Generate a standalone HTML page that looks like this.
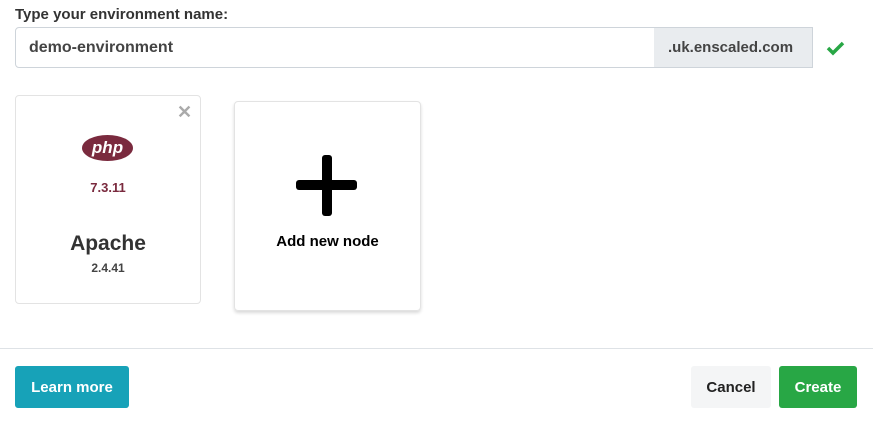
<!DOCTYPE html><html><head><style>
body{margin:0;width:873px;height:421px;background:#fff;font-family:"Liberation Sans",sans-serif;position:relative;overflow:hidden;color:#333}
.a{position:absolute}
</style></head><body>
<div class="a" style="left:15px;top:6px;font-size:15px;font-weight:bold;color:#333">Type your environment name:</div>
<div class="a" style="left:15px;top:27px;width:638px;height:39px;border:1px solid #ced4da;border-radius:4px 0 0 4px;"></div>
<div class="a" style="left:29px;top:39px;font-size:16px;font-weight:bold;color:#444">demo-environment</div>
<div class="a" style="left:654px;top:27px;width:159px;background:#e9ecef;border:1px solid #ced4da;border-left:none;box-sizing:border-box;height:41px"></div>
<div class="a" style="left:668px;top:39px;font-size:15px;font-weight:bold;color:#444">.uk.enscaled.com</div>
<svg class="a" style="left:825px;top:39px" width="22" height="18"><path d="M3 9l5 5 10-10" stroke="#28a745" stroke-width="3.5" fill="none"/></svg>
<div class="a" style="left:15px;top:95px;width:184px;height:207px;border:1px solid #e3e3e3;border-radius:4px"></div>
<div class="a" style="left:177px;top:102px;font-size:18px;font-weight:bold;color:#aaa">✕</div>
<div class="a" style="left:82px;top:135px;width:51px;height:26px;border-radius:50%;background:#7a2a3e;color:#fff;font-size:17px;font-weight:bold;font-style:italic;text-align:center;line-height:25px">php</div>
<div class="a" style="left:15px;top:180px;width:186px;text-align:center;font-size:13px;font-weight:bold;color:#7a2a3e">7.3.11</div>
<div class="a" style="left:15px;top:232px;width:186px;text-align:center;font-size:21px;font-weight:bold;color:#333">Apache</div>
<div class="a" style="left:15px;top:261px;width:186px;text-align:center;font-size:12px;font-weight:bold;color:#444">2.4.41</div>
<div class="a" style="left:234px;top:101px;width:185px;height:208px;border:1px solid #e3e3e3;border-radius:4px;box-shadow:0 2px 3px rgba(0,0,0,.15)"></div>
<div class="a" style="left:322px;top:155px;width:10px;height:61px;background:#000;border-radius:3px"></div>
<div class="a" style="left:296px;top:180px;width:61px;height:10px;background:#000;border-radius:3px"></div>
<div class="a" style="left:234px;top:233px;width:187px;text-align:center;font-size:15px;font-weight:bold;color:#000">Add new node</div>
<div class="a" style="left:0;top:348px;width:873px;height:1px;background:#dee2e6"></div>
<div class="a" style="left:15px;top:366px;width:114px;height:42px;background:#17a2b8;border-radius:3px;color:#fff;font-weight:bold;font-size:15px;text-align:center;line-height:43px">Learn more</div>
<div class="a" style="left:691px;top:366px;width:80px;height:42px;background:#f4f5f6;border-radius:3px;color:#222;font-weight:bold;font-size:15px;text-align:center;line-height:43px">Cancel</div>
<div class="a" style="left:779px;top:366px;width:78px;height:42px;background:#28a745;border-radius:3px;color:#fff;font-weight:bold;font-size:15px;text-align:center;line-height:43px">Create</div>
</body></html>
